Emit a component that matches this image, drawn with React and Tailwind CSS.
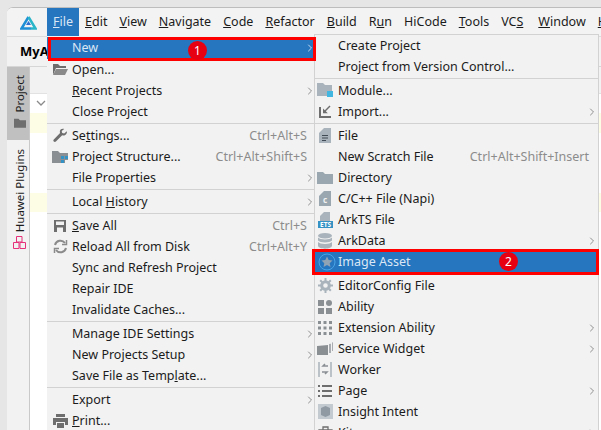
import { ChevronRight } from 'lucide-react';

const font = { fontFamily: '"Noto Sans", sans-serif' };

function Arrow({ light }) {
  return <ChevronRight size={12} strokeWidth={1.75} className={light ? 'shrink-0 text-[#dbe7f5]' : 'shrink-0 text-[#808080]'} />;
}

const FolderIcon = ({ color = '#9aa7b0', size = 16 }) => (
  <svg width={size} height={size * 0.875} viewBox="0 0 16 14"><path d="M0 1h6l2 2h8v10H0z" fill={color} /></svg>
);
const OpenIcon = () => (
  <svg width="16" height="14" viewBox="0 0 16 14"><path d="M1 1h5l2 2h6v2H4L1 12z" fill="#6e6e6e" /><path d="M4 6h12l-3 6H1z" fill="#8a8a8a" /></svg>
);
const WrenchIcon = () => (
  <svg width="15" height="15" viewBox="0 0 15 15"><path d="M13.8 3.2l-2.6 2.4-2-.6-.5-2L11.200.9C9.300.2 7.300 1.100 6.900 3c-.2.800-.1 1.500.2 2.100L.8 11.400c-.6.600-.6 1.500 0 2.100.6.600 1.500.6 2.100 0l6.300-6.300c2.500.9 5.300-1.200 4.600-4z" fill="#6e6e6e" /></svg>
);
const StructureIcon = () => (
  <svg width="16" height="14" viewBox="0 0 16 14"><path d="M0 1h6l2 2h8v10H0z" fill="#8a8f94" /><path d="M9 6h3v3H9zM13 6h3v3h-3zM9 10h3v3H9z" fill="#3592c4" /><path d="M13 10h3v3h-3z" fill="#f2f2f2" /></svg>
);
const SaveIcon = () => (
  <svg width="14" height="14" viewBox="0 0 14 14"><path d="M1 1h12v12H1z" fill="#6e6e6e" /><path d="M3 2.500h8v3.500H3z" fill="#f2f2f2" /><path d="M4 8.500h6V13H4z" fill="#f2f2f2" /></svg>
);
const ReloadIcon = () => (
  <svg width="15" height="15" viewBox="0 0 15 15" fill="none" stroke="#8a8a8a" strokeWidth="2"><path d="M2 6a5.600 5.600 0 0 1 10-2" /><path d="M13 9a5.600 5.600 0 0 1-10 2" /><path d="M13.500 1v4.500H9M1.500 14V9.500H6" strokeWidth="1.500" /></svg>
);
const PrintIcon = () => (
  <svg width="15" height="14" viewBox="0 0 15 14"><path d="M3 0h9v3H3z" fill="#6e6e6e" /><path d="M0 4h15v7h-3V8H3v3H0z" fill="#6e6e6e" /><path d="M4 9h7v5H4z" fill="#6e6e6e" /></svg>
);
const ModuleIcon = () => (
  <svg width="16" height="15" viewBox="0 0 16 15"><path d="M0 0h6l2 2h7v11H0z" fill="#a9b3bb" /><path d="M10 8h6v6h-6z" fill="#40b6e0" /></svg>
);
const ImportIcon = () => (
  <svg width="14" height="14" viewBox="0 0 14 14" fill="#6e6e6e"><path d="M1 2h2v9h10v2H1z" /><path d="M12.500 1.500L7.800 6.200l2 2H5V3.400l1.800 1.800L11.500.5z" /></svg>
);
const FileIcon = () => (
  <svg width="12" height="15" viewBox="0 0 12 15"><path d="M5 0h7v15H0V5z" fill="#a9b3bb" /><path d="M3 7h6v1H3zM3 9.500h6v1H3zM3 12h4v1H3z" fill="#3f4a55" /></svg>
);
const CIcon = () => (
  <svg width="12" height="15" viewBox="0 0 12 15"><path d="M5 0h7v15H0V5z" fill="#9aa7b0" /><text x="6" y="12" fontSize="8" fontWeight="700" textAnchor="middle" fill="#f2f2f2" style={font}>c</text></svg>
);
const EtsIcon = () => (
  <svg width="15" height="16" viewBox="0 0 15 16"><path d="M6 0h6v9H2V4z" fill="#a9b3bb" /><path d="M0 9h15v7H0z" fill="#3592c4" /><text x="7.500" y="15" fontSize="6.500" fontWeight="700" textAnchor="middle" fill="#fff" style={font}>ETS</text></svg>
);
const DataIcon = () => (
  <svg width="14" height="16" viewBox="0 0 14 16" fill="#a9b3bb"><ellipse cx="7" cy="2.800" rx="7" ry="2.800" /><path d="M0 4.500c2 2.500 12 2.500 14 0v3c-2 2.500-12 2.500-14 0zM0 9c2 2.500 12 2.500 14 0v4c-1 3.500-13 3.500-14 0z" /></svg>
);
const StarIcon = () => (
  <svg width="18" height="18" viewBox="0 0 18 18"><circle cx="9" cy="9" r="8" fill="none" stroke="#49a5e6" strokeWidth="1" /><path d="M9 3.500l1.700 3.600 3.800.5-2.800 2.600.8 3.800L9 12.100l-3.500 1.900.8-3.800L3.500 7.600l3.800-.5z" fill="#8fa3b5" /></svg>
);
const GearIcon = () => (
  <svg width="15" height="15" viewBox="0 0 15 15" fill="none" stroke="#a9b3bb"><circle cx="7.500" cy="7.500" r="3.800" strokeWidth="3" /><path d="M7.500 0v3M7.500 12v3M0 7.500h3M12 7.500h3M2.200 2.200l2 2M10.800 10.800l2 2M2.200 12.800l2-2M10.800 4.200l2-2" strokeWidth="2" /></svg>
);
const AbilityIcon = () => (
  <svg width="14" height="14" viewBox="0 0 14 14" fill="#8a8f94"><path d="M0 0h6v6H0zM0 8h6v6H0zM8 8h6v6H8z" /><circle cx="11" cy="3" r="3" /></svg>
);
const DotsIcon = () => (
  <svg width="14" height="14" viewBox="0 0 14 14" fill="#8a8f94"><path d="M0 0h3v3H0zM5.500 0h3v3h-3zM11 0h3v3h-3zM0 5.500h3v3H0zM5.500 5.500h3v3h-3zM11 5.500h3v3h-3zM0 11h3v3H0zM5.500 11h3v3h-3zM11 11h3v3h-3z" /></svg>
);
const WidgetIcon = () => (
  <svg width="16" height="13" viewBox="0 0 16 13" fill="#8a8f94"><path d="M0 4l11-1v10H0z" /><path d="M12 2l2-.3V11h-2zM15 .5l1-.2V9h-1z" opacity=".7" /></svg>
);
const WorkerIcon = () => (
  <svg width="14" height="15" viewBox="0 0 14 15" fill="none" stroke="#a9b3bb" strokeWidth="1.500"><path d="M1 0v15M13 0v15" /><path d="M10 4H5l2-2M4 10h5l-2 2" stroke="#8a8f94" /></svg>
);
const PageIcon = () => (
  <svg width="14" height="12" viewBox="0 0 14 12" fill="#6e6e6e"><path d="M0 0h2v2H0zM0 5h2v2H0zM0 10h2v2H0zM4 0h10v2H4zM4 5h10v2H4zM4 10h10v2H4z" /></svg>
);
const IntentIcon = () => (
  <svg width="15" height="15" viewBox="0 0 15 15"><path d="M0 0h15v15H0z" fill="#c3cad0" /><path d="M3 4l4.500-2L12 4v7l-4.500 2L3 11z" fill="#8f9aa3" /></svg>
);
const KitIcon = () => (
  <svg width="15" height="13" viewBox="0 0 15 13" fill="none" stroke="#6e6e6e" strokeWidth="1.300"><path d="M1 4h13v8H1zM5 4V1h5v3" /></svg>
);

function Row({ icon, label, shortcut, arrow, slot = 'w-[25px] pl-[1px]' }) {
  return (
    <div className="flex h-[21px] items-center text-[12.5px] text-[#1b1b1b]">
      <div className={`flex shrink-0 items-center justify-center ${slot}`}>{icon}</div>
      <span className="flex-1 pt-[2px] whitespace-nowrap">{label}</span>
      {shortcut && <span className="mr-[9px] pt-[2px] whitespace-nowrap text-[#8c8c8c]">{shortcut}</span>}
      {arrow && <Arrow />}
    </div>
  );
}

const SubRow = (props) => <Row slot="w-[23px] pr-[3px]" {...props} />;

const Sep = () => (
  <div className="flex h-[3px] items-center">
    <div className="h-px w-full bg-[#d2d2d2]" />
  </div>
);

const menuBar = [
  ['E', 'dit'], ['V', 'iew'], ['N', 'avigate'], ['C', 'ode'], ['R', 'efactor'], ['B', 'uild'],
];

function FileMenu() {
  return (
    <div className="absolute top-[36px] left-[47px] h-[394px] w-[269px] overflow-hidden bg-[#f2f2f2] pt-px">
      <div className="flex h-[22px] items-center bg-[#2675bf] pl-[25px] text-[12.5px] text-[#dbe7f5]">
        <span className="flex-1">New</span>
        <Arrow light />
      </div>
      <Row icon={<OpenIcon />} label="Open..." />
      <Row label={<><u>R</u>ecent Projects</>} arrow />
      <Row label="Close Project" />
      <Sep />
      <Row icon={<WrenchIcon />} label={<>Se<u>t</u>tings...</>} shortcut="Ctrl+Alt+S" />
      <Row icon={<StructureIcon />} label="Project Structure..." shortcut="Ctrl+Alt+Shift+S" />
      <Row label="File Properties" arrow />
      <Sep />
      <Row label={<>Local <u>H</u>istory</>} arrow />
      <Sep />
      <Row icon={<SaveIcon />} label={<><u>S</u>ave All</>} shortcut="Ctrl+S" />
      <Row icon={<ReloadIcon />} label="Reload All from Disk" shortcut="Ctrl+Alt+Y" />
      <Row label="Sync and Refresh Project" />
      <Row label="Repair IDE" />
      <Row label="Invalidate Caches..." />
      <Sep />
      <Row label="Manage IDE Settings" arrow />
      <Row label="New Projects Setup" arrow />
      <Row label={<>Save File as Temp<u>l</u>ate...</>} />
      <Sep />
      <Row label="Export" arrow />
      <Row icon={<PrintIcon />} label={<><u>P</u>rint...</>} />
    </div>
  );
}

function NewMenu() {
  return (
    <div className="absolute top-[34px] left-[314px] h-[396px] w-[285px] border-x border-t border-[#d2d2d2] bg-[#f2f2f2]">
      <SubRow label="Create Project" />
      <SubRow label="Project from Version Control..." />
      <Sep />
      <SubRow icon={<ModuleIcon />} label="Module..." />
      <SubRow icon={<ImportIcon />} label="Import..." arrow />
      <Sep />
      <SubRow icon={<FileIcon />} label="File" />
      <SubRow label="New Scratch File" shortcut="Ctrl+Alt+Shift+Insert" />
      <SubRow icon={<FolderIcon />} label="Directory" />
      <SubRow icon={<CIcon />} label="C/C++ File (Napi)" />
      <SubRow icon={<EtsIcon />} label="ArkTS File" />
      <SubRow icon={<DataIcon />} label="ArkData" arrow />
      <div className="relative z-10 -mt-[2px] -ml-[3px] flex h-[26px] w-[287px] items-center border-3 border-[#ff0000] bg-[#2675bf] text-[12.5px] text-[#dbe7f5]">
        <div className="flex w-[23px] shrink-0 items-center justify-center"><StarIcon /></div>
        <span className="pt-[1px]">Image Asset</span>
      </div>
      <SubRow icon={<GearIcon />} label="EditorConfig File" />
      <SubRow icon={<AbilityIcon />} label="Ability" />
      <SubRow icon={<DotsIcon />} label="Extension Ability" arrow />
      <SubRow icon={<WidgetIcon />} label="Service Widget" arrow />
      <SubRow icon={<WorkerIcon />} label="Worker" />
      <SubRow icon={<PageIcon />} label="Page" arrow />
      <SubRow icon={<IntentIcon />} label="Insight Intent" />
      <SubRow icon={<KitIcon />} label="Kit" arrow />
    </div>
  );
}

export default function App() {
  return (
    <div className="relative h-[430px] w-[601px] overflow-hidden bg-[#e6e6e6] pt-[7px] pl-[7px]" style={font}>
      <div className="flex h-[423px] flex-col overflow-hidden rounded-tl-[6px] border-t border-[#bdbdbd] bg-white">
        {/* title bar */}
        <div className="flex h-[28px] shrink-0 items-center bg-[#f3f3f3] pt-px text-[12.5px] text-[#1b1b1b]">
          <div className="flex w-[40px] shrink-0 justify-center pl-[2px]">
            <svg width="17" height="14" viewBox="0 0 17 14" fill="none">
              <path d="M8.500 1L1.500 12.500H11" stroke="#1f8fd6" strokeWidth="2.500" />
              <path d="M8.500 1L15.500 12.500H11" stroke="#2bb5c9" strokeWidth="2.500" />
              <path d="M6 9l2.500-4 2.500 4z" fill="#2c6fd1" />
            </svg>
          </div>
          <div className="-mt-px flex h-[28px] shrink-0 items-center bg-[#2675bf] px-[6px] pt-px text-[#dbe7f5]"><span><u>F</u>ile</span></div>
          {menuBar.map(([key, rest]) => (
            <span key={rest} className="shrink-0 px-[6px] whitespace-nowrap"><u>{key}</u>{rest}</span>
          ))}
          <span className="shrink-0 px-[6px] whitespace-nowrap">R<u>u</u>n</span>
          <span className="shrink-0 px-[6px] whitespace-nowrap">HiCode</span>
          <span className="shrink-0 px-[6px] whitespace-nowrap"><u>T</u>ools</span>
          <span className="shrink-0 px-[6px] whitespace-nowrap">VC<u>S</u></span>
          <span className="shrink-0 pr-[6px] pl-[9px] whitespace-nowrap"><u>W</u>indow</span>
          <span className="shrink-0 px-[6px]"><u>H</u></span>
        </div>
        {/* project bar */}
        <div className="flex h-[30px] shrink-0 items-center border-t border-[#dcdcdc] bg-[#f2f2f2] pl-[13px] text-[13px] font-bold text-black">
          MyA
        </div>
        <div className="flex flex-1 border-t border-[#d6d6d6]">
          {/* tool strip */}
          <div className="w-[23px] shrink-0 border-r border-[#c9c9c9] bg-[#f2f2f2] text-[11.5px] text-[#1b1b1b]">
            <div className="flex h-[73px] flex-col items-center gap-[5px] bg-[#c0c0c0] pt-[8px] pl-[3px]">
              <span className="rotate-180 [writing-mode:vertical-rl]">Project</span>
              <FolderIcon color="#6e6e6e" size={12} />
            </div>
            <div className="flex flex-col items-center gap-[4px] pt-[9px] pl-[3px]">
              <span className="rotate-180 whitespace-nowrap [writing-mode:vertical-rl]">Huawei Plugins</span>
              <svg width="13" height="13" viewBox="0 0 13 13" fill="none" stroke="#e6307a"><path d="M.5 6.500h5.500v6H.5zM7 6.500h5.500v6H7zM3.500.5h5.500v5.500H3.500z" /></svg>
            </div>
          </div>
          {/* project tree stub */}
          <div className="flex-1">
            <div className="h-[27px] border-b border-[#e2e2e2] bg-[#f2f2f2]" />
            <div className="flex h-[19px] items-center pl-[6px] text-[#8a8a8a]">
              <svg width="10" height="7" viewBox="0 0 10 7" fill="none" stroke="currentColor" strokeWidth="1.300"><path d="M1 1l4 4 4-4" /></svg>
            </div>
            <div className="h-[20px] bg-[#fdfde6]" />
            <div className="h-[60px]" />
            <div className="h-[19px] bg-[#fdfde6]" />
          </div>
        </div>
      </div>

      <FileMenu />
      <NewMenu />

      {/* annotations over the menus */}
      <div className="absolute top-[37px] left-[48px] z-20 h-[24px] w-[268px] border-3 border-[#ff0000]" />
      <div className="absolute top-[41px] left-[188px] z-20 flex h-[19px] w-[19px] items-center justify-center rounded-full bg-[#e60012] text-[12px] text-white">1</div>
      <div className="absolute top-[252px] left-[499px] z-20 flex h-[19px] w-[19px] items-center justify-center rounded-full bg-[#e60012] text-[12px] text-white">2</div>
    </div>
  );
}
